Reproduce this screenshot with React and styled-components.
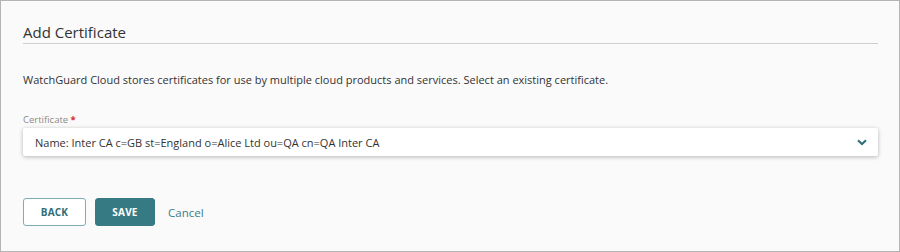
import React from "react";
import styled, { createGlobalStyle } from "styled-components";

const Global = createGlobalStyle`
  html, body { margin: 0; padding: 0; background: #fafafa; }
  * { box-sizing: border-box; }
`;

const Frame = styled.div`
  width: 900px;
  height: 252px;
  border: 1px solid #b4b4b4;
  background: #fafafa;
  padding: 21px 21px 0 22px;
  font-family: "Open Sans", "Noto Sans", sans-serif;
  color: #333;
  display: flex;
  flex-direction: column;
`;

const Title = styled.h2`
  margin: 0;
  font-size: 15px;
  font-weight: 400;
  line-height: 20px;
  color: #333;
  padding-bottom: 1px;
  border-bottom: 1px solid #cfcfcf;
`;

const Description = styled.p`
  margin: 28px 0 0;
  font-size: 11px;
  line-height: 15px;
  color: #333;
`;

const Field = styled.div`
  margin-top: 26px;
  display: flex;
  flex-direction: column;
`;

const Label = styled.label`
  font-size: 9.5px;
  line-height: 13px;
  color: #8a8a8a;
  margin-bottom: 2px;
`;

const Required = styled.span`
  color: #d62b2b;
  font-weight: 700;
`;

const Select = styled.div`
  height: 28px;
  background: #fff;
  border-radius: 2px;
  box-shadow: 0 1px 4px rgba(0, 0, 0, 0.28);
  display: flex;
  align-items: center;
  justify-content: space-between;
  padding: 0 11px 0 12px;
  font-size: 11px;
  color: #333;
`;

const Actions = styled.div`
  margin-top: 42px;
  display: flex;
  align-items: center;
  gap: 9px;
`;

const Button = styled.button`
  height: 28px;
  width: ${(p) => p.$w}px;
  border-radius: 3px;
  font-family: inherit;
  font-size: 10px;
  font-weight: 700;
  letter-spacing: 0.2px;
  cursor: pointer;
  border: 1px solid ${(p) => (p.$primary ? "#367a84" : "#7fadb4")};
  background: ${(p) => (p.$primary ? "#367a84" : "#fff")};
  color: ${(p) => (p.$primary ? "#fff" : "#2f6e78")};
`;

const LinkButton = styled.a`
  margin-left: 4px;
  font-size: 11.5px;
  color: #3b7c86;
  text-decoration: none;
`;

export default function App() {
  return (
    <>
      <Global />
      <Frame>
        <Title>Add Certificate</Title>
        <Description>
          WatchGuard Cloud stores certificates for use by multiple cloud products and services. Select an existing certificate.
        </Description>
        <Field>
          <Label>
            Certificate <Required>*</Required>
          </Label>
          <Select>
            <span>Name: Inter CA c=GB st=England o=Alice Ltd ou=QA cn=QA Inter CA</span>
            <svg width="10" height="7" viewBox="0 0 10 7">
              <path d="M1 1.2 L5 5 L9 1.2" fill="none" stroke="#2f6e78" strokeWidth="2" />
            </svg>
          </Select>
        </Field>
        <Actions>
          <Button $w={63}>BACK</Button>
          <Button $primary $w={60}>SAVE</Button>
          <LinkButton href="#">Cancel</LinkButton>
        </Actions>
      </Frame>
    </>
  );
}
